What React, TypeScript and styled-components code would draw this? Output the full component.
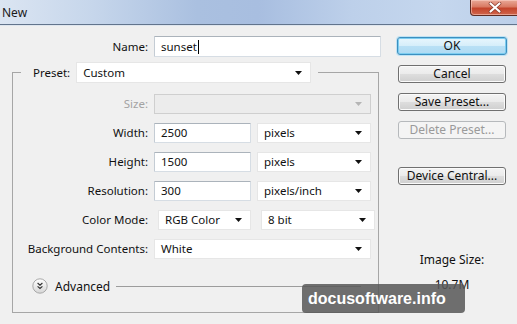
import React, { FC } from "react";
import styled, { createGlobalStyle } from "styled-components";

const GlobalStyle = createGlobalStyle`
	html, body {
		margin: 0;
		padding: 0;
		background: #f0f0f0;
	}
	body {
		font-family: "Noto Sans", "DejaVu Sans", sans-serif;
		font-size: 11.5px;
		color: #111;
	}
`;

const ArrowDown: FC<{ disabled?: boolean }> = ({ disabled }) => (
	<svg width="7" height="4" viewBox="0 0 7 4">
		<path d="M0 0 H7 L3.5 4 Z" fill={disabled ? "#b5b5b5" : "#111"} />
	</svg>
);

const Dropdown: FC<{ value?: string; width: number; height?: number; disabled?: boolean }> = ({
	value,
	width,
	height = 20,
	disabled,
}) => (
	<DropBox $width={width} $height={height} $disabled={disabled}>
		<DropValue>{value}</DropValue>
		<ArrowDown disabled={disabled} />
	</DropBox>
);

const App: FC = () => {
	return (
		<Window>
			<GlobalStyle />
			<TitleBar>
				<Title>New</Title>
				<CloseButton>
					<svg width="14" height="11" viewBox="0 0 14 11">
						<path
							d="M2.5 1.5 L11.5 9.5 M11.5 1.5 L2.5 9.5"
							stroke="#8a3a2a"
							strokeWidth="3.6"
							strokeLinecap="round"
						/>
						<path
							d="M2.5 1.5 L11.5 9.5 M11.5 1.5 L2.5 9.5"
							stroke="#fff"
							strokeWidth="2.2"
							strokeLinecap="round"
						/>
					</svg>
				</CloseButton>
			</TitleBar>

			<Body>
				<Main>
					<Row>
						<Label>Name:</Label>
						<TextField $width={227} $height={21}>
							sunset
							<Caret />
						</TextField>
					</Row>

					<GroupBox>
						<Legend>
							<LegendInner>
								<span>Preset:</span>
								<Dropdown value="Custom" width={235} height={21} />
							</LegendInner>
						</Legend>

						<Row>
							<Label $disabled>Size:</Label>
							<Dropdown width={217} disabled />
						</Row>
						<Row>
							<Label>Width:</Label>
							<TextField $width={97}>2500</TextField>
							<Dropdown value="pixels" width={114} />
						</Row>
						<Row>
							<Label>Height:</Label>
							<TextField $width={97}>1500</TextField>
							<Dropdown value="pixels" width={114} />
						</Row>
						<Row>
							<Label>Resolution:</Label>
							<TextField $width={97}>300</TextField>
							<Dropdown value="pixels/inch" width={114} />
						</Row>
						<Row $gap={10}>
							<Label>Color Mode:</Label>
							<Dropdown value="RGB Color" width={93} />
							<Dropdown value="8 bit" width={114} />
						</Row>
						<Row>
							<Label>Background Contents:</Label>
							<Dropdown value="White" width={217} />
						</Row>

						<AdvancedRow>
							<svg width="16" height="16" viewBox="0 0 16 16">
								<defs>
									<linearGradient id="adv" x1="0" y1="0" x2="0" y2="1">
										<stop offset="0" stopColor="#ffffff" />
										<stop offset="1" stopColor="#d6d6d6" />
									</linearGradient>
								</defs>
								<circle cx="8" cy="8" r="7.2" fill="url(#adv)" stroke="#a8a8a8" />
								<path
									d="M5.6 5 L8 7.1 L10.4 5 M5.6 8.4 L8 10.5 L10.4 8.4"
									fill="none"
									stroke="#333"
									strokeWidth="1.2"
								/>
							</svg>
							<AdvancedText>Advanced</AdvancedText>
							<Rule />
						</AdvancedRow>
					</GroupBox>
				</Main>

				<Side>
					<Button $primary>OK</Button>
					<Button>Cancel</Button>
					<Button>Save Preset...</Button>
					<Button disabled>Delete Preset...</Button>
					<Button $spaced>Device Central...</Button>
					<SizeCaption>Image Size:</SizeCaption>
					<SizeValue>10.7M</SizeValue>
				</Side>
			</Body>

			<Watermark>docusoftware.info</Watermark>
		</Window>
	);
};

const Window = styled.div`
	position: relative;
	width: 517px;
	height: 324px;
	overflow: hidden;
	background: #f0f0f0;
`;

const TitleBar = styled.div`
	display: flex;
	align-items: flex-start;
	height: 24px;
	background: linear-gradient(
		to right,
		#dbe5f2 0%,
		#c6d6eb 18%,
		#aac0e0 38%,
		#a8bee0 50%,
		#bdd0ea 68%,
		#c5d7ee 85%,
		#bccfe9 100%
	);
	border-bottom: 1px solid #62748c;
	box-shadow: 0 1px 0 #dfe6ee;
`;

const Title = styled.div`
	padding: 4px 0 0 2px;
	font-size: 12px;
	color: #1a1a1a;
`;

const CloseButton = styled.div`
	margin-left: auto;
	margin-right: -3px;
	width: 48px;
	height: 15px;
	display: flex;
	align-items: center;
	justify-content: center;
	border: 1px solid #5d2b22;
	border-top: none;
	border-radius: 0 0 4px 4px;
	background: linear-gradient(to bottom, #e9a998 0%, #d97a63 45%, #c4442b 55%, #d0664d 100%);
	box-shadow: inset 0 0 0 1px rgba(255, 220, 210, 0.5);
`;

const Body = styled.div`
	display: flex;
	padding-top: 11px;
`;

const Main = styled.div`
	width: 390px;
	display: flex;
	flex-direction: column;
`;

const Row = styled.div<{ $gap?: number }>`
	display: flex;
	align-items: center;
	gap: ${(p) => p.$gap ?? 6}px;
	height: 21px;
`;

const Label = styled.div<{ $disabled?: boolean }>`
	width: 148px;
	text-align: right;
	white-space: nowrap;
	color: ${(p) => (p.$disabled ? "#a3a3a3" : "#111")};

	fieldset & {
		width: 135px;
	}
`;

const TextField = styled.div<{ $width: number; $height?: number }>`
	box-sizing: border-box;
	width: ${(p) => p.$width}px;
	height: ${(p) => p.$height ?? 20}px;
	display: flex;
	align-items: center;
	padding-left: 6px;
	background: #fff;
	border: 1px solid #d6dde4;
	border-top-color: #abb3bb;
	border-left-color: #c4ccd4;
	border-radius: 1px;
`;

const Caret = styled.span`
	display: inline-block;
	width: 1px;
	height: 14px;
	margin-left: 1px;
	background: #000;
`;

const DropBox = styled.div<{ $width: number; $height: number; $disabled?: boolean }>`
	box-sizing: border-box;
	width: ${(p) => p.$width}px;
	height: ${(p) => p.$height}px;
	display: flex;
	align-items: center;
	padding: 0 8px 0 6px;
	background: ${(p) => (p.$disabled ? "#ececec" : "#fff")};
	border: 1px solid ${(p) => (p.$disabled ? "#cfcfcf" : "#e6e6e6")};
`;

const DropValue = styled.span`
	flex: 1;
	white-space: nowrap;
`;

const GroupBox = styled.fieldset`
	box-sizing: border-box;
	width: 367px;
	margin: 5px 0 0 12px;
	padding: 10px 0 18px 0;
	border: 1px solid #a6a6a6;
	display: flex;
	flex-direction: column;
	gap: 8px;
	min-width: 0;
`;

const Legend = styled.legend`
	margin-left: 8px;
	padding: 0 7px 0 12px;
`;

const LegendInner = styled.div`
	display: flex;
	align-items: center;
	gap: 6px;
	height: 21px;
`;

const AdvancedRow = styled.div`
	display: flex;
	align-items: center;
	height: 16px;
	margin-top: 11px;
	padding: 0 17px 0 19px;
`;

const AdvancedText = styled.span`
	margin-left: 7px;
	font-size: 12px;
`;

const Rule = styled.div`
	flex: 1;
	height: 1px;
	margin-left: 6px;
	background: #9c9c9c;
`;

const Side = styled.div`
	display: flex;
	flex-direction: column;
	align-items: center;
	width: 110px;
	margin-left: 7px;
	padding-top: 1px;
	gap: 10px;
`;

const Button = styled.button<{ $primary?: boolean; $spaced?: boolean }>`
	box-sizing: border-box;
	width: ${(p) => (p.$primary ? 110 : 108)}px;
	height: 18px;
	margin: ${(p) => (p.$spaced ? "18px" : "0")} 0 0 0;
	padding: 0;
	font-family: inherit;
	font-size: 12px;
	line-height: 14px;
	color: #111;
	border-radius: 3px;
	border: 1px solid ${(p) => (p.$primary ? "#3c8fc0" : "#707070")};
	background: ${(p) =>
		p.$primary
			? "linear-gradient(to bottom, #e8f6fd 0%, #d6eefa 48%, #b9e0f5 52%, #aedaf3 100%)"
			: "linear-gradient(to bottom, #f4f4f4 0%, #ebebeb 48%, #dddddd 52%, #cfcfcf 100%)"};
	box-shadow: ${(p) =>
		p.$primary ? "inset 0 0 0 1px #7ccdf0, 0 0 0 1px #bfe3f4" : "inset 0 0 0 1px #fbfbfb"};

	&:disabled {
		color: #9a9a9a;
		border-color: #b6b9bc;
		background: #f4f4f4;
		box-shadow: none;
	}
`;

const SizeCaption = styled.div`
	margin-top: 57px;
	line-height: 16px;
	font-size: 12px;
`;

const SizeValue = styled.div`
	margin-top: -1px;
	line-height: 16px;
	font-size: 12px;
`;

const Watermark = styled.div`
	position: absolute;
	left: 302px;
	top: 284px;
	width: 163px;
	height: 29px;
	box-sizing: border-box;
	padding-left: 6px;
	border-radius: 4px;
	background: rgba(88, 88, 88, 0.86);
	color: #fff;
	font-family: "Liberation Sans", Arial, sans-serif;
	font-weight: bold;
	font-size: 16px;
	line-height: 29px;
	white-space: nowrap;
`;

export default App;
